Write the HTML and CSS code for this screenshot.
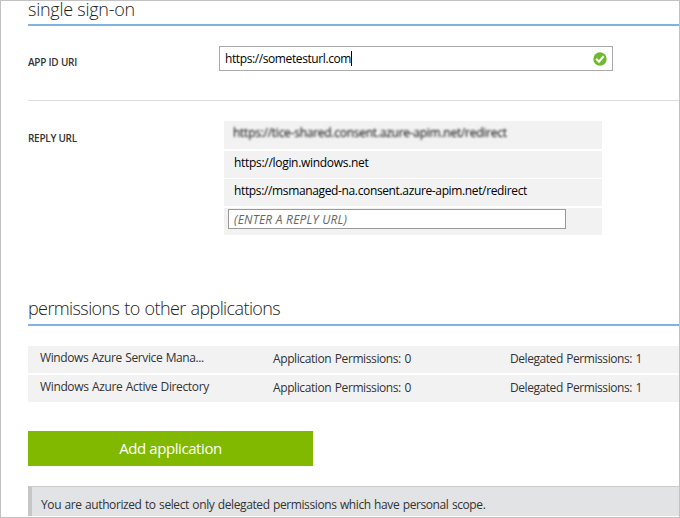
FILE: index.html
```html
<!DOCTYPE html>
<html lang="en">
<head>
<meta charset="utf-8">
<title>Configure application</title>
<link rel="stylesheet" href="styles.css">
</head>
<body>
<main class="frame">
  <section class="sso">
    <h2><span class="t-sso">single sign-on</span></h2>
    <div class="field app-id">
      <label class="label t-appid">APP ID URI</label>
      <div class="uri-input">
        <span class="t-uri">https://sometesturl.com</span><i class="caret"></i>
        <svg class="ok" viewBox="0 0 14 14"><circle cx="7" cy="7" r="6.7"/><path d="M3.2 6.7 6 9.7 10.6 4.3"/></svg>
      </div>
    </div>
    <div class="field reply">
      <label class="label t-reply">REPLY URL</label>
      <ul class="urls">
        <li><span class="obscured">https://tice-shared.consent.azure-apim.net/redirect</span></li>
        <li><span class="t-login">https://login.windows.net</span></li>
        <li><span class="t-ms">https://msmanaged-na.consent.azure-apim.net/redirect</span></li>
        <li class="entry"><div class="new-url"><span class="t-enter">(ENTER A REPLY URL)</span></div></li>
      </ul>
    </div>
  </section>
  <section class="permissions">
    <h2><span class="t-perm">permissions to other applications</span></h2>
    <div class="apps">
      <div class="app"><span class="name t-sm">Windows Azure Service Mana...</span><span class="t-ap">Application Permissions: 0</span><span class="t-dp">Delegated Permissions: 1</span></div>
      <div class="app"><span class="name t-ad">Windows Azure Active Directory</span><span class="t-ap">Application Permissions: 0</span><span class="t-dp">Delegated Permissions: 1</span></div>
    </div>
    <button class="add"><span class="t-add">Add application</span></button>
    <p class="note"><span class="t-note">You are authorized to select only delegated permissions which have personal scope.</span></p>
  </section>
</main>
</body>
</html>
```

FILE: styles.css
```css
* { box-sizing: border-box; }
body {
  margin: 0;
  background: #fff;
  font: 12px/16px "Open Sans", "Noto Sans", sans-serif;
  color: #333;
}
.frame {
  width: 680px;
  height: 518px;
  border: 1px solid #c2c2c2;
  padding-left: 27px;
  white-space: nowrap;
}
h2 {
  margin: 0;
  border-bottom: 2px solid #7db4e3;
  font-size: 18px;
  font-weight: 300;
  color: #222;
}
.sso { height: 298px; }
.sso h2 { height: 25px; line-height: 16px; }
.field { display: flex; }
.label { flex: none; font-size: 10px; font-weight: 600; color: #333; }
.app-id { height: 75px; padding-top: 20px; border-bottom: 1px solid #dcdcdc; }
.app-id .label { width: 191px; padding-top: 8px; }
.uri-input {
  display: flex;
  align-items: center;
  width: 394px;
  height: 25px;
  border: 1px solid #aaa;
  padding: 0 5px;
  color: #000;
}
.caret { width: 1px; height: 15px; background: #000; }
.ok { width: 14px; height: 14px; margin-left: auto; }
.ok circle { fill: #6fba2c; }
.ok path { fill: none; stroke: #fff; stroke-width: 2.1; }
.reply { padding-top: 20px; }
.reply .label { width: 196px; padding-top: 9px; }
.urls {
  display: grid;
  grid-template-rows: 28px 27px 27px 27px;
  row-gap: 1.67px;
  width: 378px;
  margin: 0;
  padding: 0;
  list-style: none;
  color: #000;
}
.urls li { background: #f2f2f2; padding: 4px 0 0 10px; }
.urls .entry { padding: 1px 0 0 4px; }
.obscured {
  display: inline-block;
  margin-left: -1px;
  letter-spacing: -0.26px;
  filter: blur(0.9px);
  color: #000;
}
.new-url {
  width: 338px;
  height: 20px;
  border: 1px solid #999;
  padding: 2px 5px;
  background: #fff;
  font-style: italic;
  color: #666;
}
.t-sso { letter-spacing: -0.25px; }
.t-perm { letter-spacing: -0.6px; word-spacing: 0.8px; }
.t-appid { letter-spacing: -0.3px; word-spacing: 0.3px; }
.t-reply { letter-spacing: -0.27px; }
.t-uri { letter-spacing: -0.4px; }
.t-login { letter-spacing: -0.3px; }
.t-ms { letter-spacing: -0.36px; }
.t-enter { letter-spacing: 0.22px; }
.t-sm { letter-spacing: -0.4px; word-spacing: 0.7px; }
.t-ad { letter-spacing: -0.36px; word-spacing: 0.7px; }
.t-ap { letter-spacing: -0.4px; word-spacing: 0.8px; }
.t-dp { letter-spacing: -0.44px; word-spacing: 0.8px; }
.t-add { letter-spacing: -0.42px; }
.t-note { letter-spacing: -0.4px; word-spacing: 0.7px; }
.permissions h2 { height: 27px; line-height: 18px; }
.apps { display: grid; row-gap: 2px; padding-top: 20px; }
.app {
  display: grid;
  grid-template-columns: 232px 237px auto;
  height: 27px;
  padding: 5px 0 0 12px;
  background: #f2f2f2;
}
.app > :not(.name) { padding-left: 1px; }
.name { position: relative; top: -1px; }
.add {
  display: block;
  width: 285px;
  height: 35px;
  margin: 29px 0 20px;
  border: 0;
  padding: 0;
  background: #80b900;
  color: #fff;
  font: 15px/35px "Open Sans", "Noto Sans", sans-serif;
}
.note {
  height: 30px;
  margin: 0;
  border-top: 1px solid #cbcbcd;
  border-left: 4px solid #c6c6c8;
  padding: 10px 0 0 9px;
  background: #e2e3e5;
}
```
